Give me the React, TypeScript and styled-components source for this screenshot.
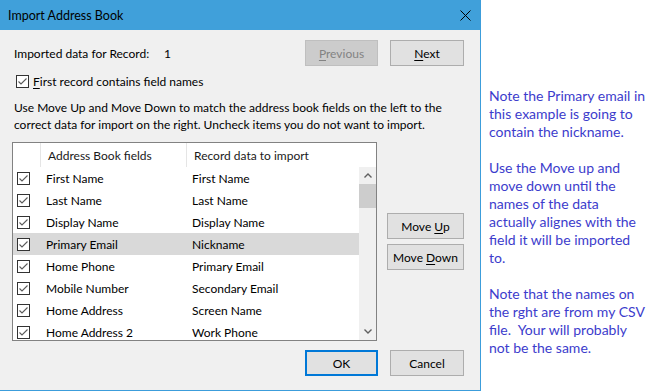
import styled, { createGlobalStyle } from "styled-components";

const GlobalStyle = createGlobalStyle`
  html, body {
    margin: 0;
    padding: 0;
    background: #ffffff;
  }
  body {
    width: 666px;
    height: 391px;
    overflow: hidden;
    font-family: Lato, "Noto Sans", sans-serif;
  }
`;

const rows = [
  { field: "First Name", data: "First Name" },
  { field: "Last Name", data: "Last Name" },
  { field: "Display Name", data: "Display Name" },
  { field: "Primary Email", data: "Nickname", selected: true },
  { field: "Home Phone", data: "Primary Email" },
  { field: "Mobile Number", data: "Secondary Email" },
  { field: "Home Address", data: "Screen Name" },
  { field: "Home Address 2", data: "Work Phone" },
];

const Check = () => (
  <CheckBox>
    <svg width="11" height="11" viewBox="0 0 11 11">
      <path d="M1.5 5.5 L4 8 L9.5 2.5" fill="none" stroke="#5a5a5a" strokeWidth="1.1" />
    </svg>
  </CheckBox>
);

const App = () => {
  return (
    <>
      <GlobalStyle />
      <Page>
        <Dialog>
          <TitleBar>
            <span>Import Address Book</span>
            <svg width="11" height="11" viewBox="0 0 11 11">
              <path d="M0.5 0.5 L10.5 10.5 M10.5 0.5 L0.5 10.5" stroke="#000" strokeWidth="1" />
            </svg>
          </TitleBar>
          <Body>
            <TopRow>
              <Label>Imported data for Record:</Label>
              <span>1</span>
              <Spacer />
              <ButtonGroup>
                <Button $w={73} disabled>
                  <u>P</u>revious
                </Button>
                <Button $w={74}>
                  <u>N</u>ext
                </Button>
              </ButtonGroup>
            </TopRow>
            <CheckRow>
              <Check />
              <span>
                <u>F</u>irst record contains field names
              </span>
            </CheckRow>
            <Para>
              Use Move Up and Move Down to match the address book fields on the left to the
              <br />
              correct data for import on the right. Uncheck items you do not want to import.
            </Para>
            <Main>
              <ListBox>
                <HeaderRow>
                  <HeadCell />
                  <HeadCell $sep>Address Book fields</HeadCell>
                  <HeadCell $sep>Record data to import</HeadCell>
                </HeaderRow>
                <ListArea>
                  <Rows>
                    {rows.map((r) => (
                      <Row key={r.field} $selected={!!r.selected}>
                        <CheckCell>
                          <Check />
                        </CheckCell>
                        <Cell>{r.field}</Cell>
                        <Cell>{r.data}</Cell>
                      </Row>
                    ))}
                  </Rows>
                  <ScrollBar>
                    <ScrollArrow>
                      <svg width="8" height="5" viewBox="0 0 8 5">
                        <path d="M0.5 4.5 L4 1 L7.5 4.5" fill="none" stroke="#606060" strokeWidth="1.4" />
                      </svg>
                    </ScrollArrow>
                    <Thumb />
                    <Spacer />
                    <ScrollArrow>
                      <svg width="8" height="5" viewBox="0 0 8 5">
                        <path d="M0.5 0.5 L4 4 L7.5 0.5" fill="none" stroke="#606060" strokeWidth="1.4" />
                      </svg>
                    </ScrollArrow>
                  </ScrollBar>
                </ListArea>
              </ListBox>
              <SideButtons>
                <Button $w={77}>
                  Move <u>U</u>p
                </Button>
                <Button $w={77}>
                  Move <u>D</u>own
                </Button>
              </SideButtons>
            </Main>
            <Footer>
              <Button $w={73} $default>
                OK
              </Button>
              <Button $w={74}>Cancel</Button>
            </Footer>
          </Body>
        </Dialog>
        <Notes>
          <NoteBlock>
            Note the Primary email in
            <br />
            this example is going to
            <br />
            contain the nickname.
          </NoteBlock>
          <NoteBlock>
            Use the Move up and
            <br />
            move down until the
            <br />
            names of the data
            <br />
            actually alignes with the
            <br />
            field it will be imported
            <br />
            to.
          </NoteBlock>
          <NoteBlock>
            Note that the names on
            <br />
            the rght are from my CSV
            <br />
            file.&nbsp; Your will probably
            <br />
            not be the same.
          </NoteBlock>
        </Notes>
      </Page>
    </>
  );
};

export default App;

const Page = styled.div`
  display: flex;
  width: 666px;
  height: 391px;
`;

const Dialog = styled.div`
  width: 481px;
  height: 391px;
  box-sizing: border-box;
  border-right: 1px solid #3c9ddb;
  border-bottom: 1px solid #3c9ddb;
  background: #f0f0f0;
  display: flex;
  flex-direction: column;
  font-size: 12px;
  color: #000;
`;

const TitleBar = styled.div`
  height: 30px;
  flex-shrink: 0;
  background: #40a0da;
  display: flex;
  align-items: center;
  justify-content: space-between;
  padding: 0 9px 0 8px;
  font-size: 12.5px;
`;

const Body = styled.div`
  display: flex;
  flex-direction: column;
  padding: 10px 16px 0 12px;
`;

const TopRow = styled.div`
  display: flex;
  align-items: center;
  height: 26px;
`;

const Label = styled.span`
  margin-left: 2px;
  width: 150px;
`;

const Spacer = styled.div`
  flex: 1;
`;

const ButtonGroup = styled.div`
  display: flex;
  gap: 12px;
`;

const Button = styled.button<{ $w: number; $default?: boolean }>`
  width: ${(p) => p.$w}px;
  height: 26px;
  box-sizing: border-box;
  padding: 0;
  background: #e1e1e1;
  border: ${(p) => (p.$default ? "2px solid #0078d7" : "1px solid #adadad")};
  font-family: inherit;
  font-size: 12px;
  color: #000;
  &:disabled {
    background: #cccccc;
    border-color: #bfbfbf;
    color: #838383;
  }
  u {
    text-underline-offset: 2px;
  }
`;

const CheckRow = styled.div`
  display: flex;
  align-items: center;
  gap: 4px;
  height: 16px;
  margin-top: 7px;
  padding-left: 4px;
  u {
    text-underline-offset: 2px;
  }
`;

const CheckBox = styled.span`
  display: inline-flex;
  align-items: center;
  justify-content: center;
  width: 13px;
  height: 13px;
  box-sizing: border-box;
  border: 1px solid #333;
  background: #fff;
`;

const Para = styled.p`
  margin: 10px 0 0 2px;
  line-height: 17px;
  white-space: nowrap;
`;

const Main = styled.div`
  display: flex;
  gap: 10px;
  margin-top: 9px;
`;

const ListBox = styled.div`
  width: 365px;
  height: 199px;
  box-sizing: border-box;
  border: 1px solid #828282;
  background: #fff;
  display: flex;
  flex-direction: column;
  overflow: hidden;
`;

const HeaderRow = styled.div`
  display: grid;
  grid-template-columns: 27px 146px 1fr;
  height: 24px;
  flex-shrink: 0;
`;

const HeadCell = styled.div<{ $sep?: boolean }>`
  display: flex;
  align-items: center;
  padding-left: 7px;
  border-left: ${(p) => (p.$sep ? "1px solid #e5e5e5" : "none")};
  color: #1a1a1a;
  white-space: nowrap;
`;

const ListArea = styled.div`
  display: flex;
  flex: 1;
  min-height: 0;
`;

const Rows = styled.div`
  flex: 1;
  overflow: hidden;
`;

const Row = styled.div<{ $selected: boolean }>`
  display: grid;
  grid-template-columns: 27px 146px 1fr;
  height: 22px;
  align-items: center;
  background: ${(p) => (p.$selected ? "#d9d9d9" : "transparent")};
`;

const CheckCell = styled.div`
  display: flex;
  padding-left: 4px;
`;

const Cell = styled.div`
  padding-left: 6px;
  white-space: nowrap;
`;

const ScrollBar = styled.div`
  width: 17px;
  background: #f0f0f0;
  display: flex;
  flex-direction: column;
`;

const ScrollArrow = styled.div`
  height: 17px;
  display: flex;
  align-items: center;
  justify-content: center;
`;

const Thumb = styled.div`
  height: 24px;
  background: #cdcdcd;
`;

const SideButtons = styled.div`
  display: flex;
  flex-direction: column;
  gap: 5px;
  margin-top: 71px;
`;

const Footer = styled.div`
  display: flex;
  justify-content: flex-end;
  gap: 12px;
  margin-top: 9px;
`;

const Notes = styled.div`
  flex: 1;
  padding: 87px 0 0 8px;
  font-family: Lato, "Noto Sans", sans-serif;
  font-size: 14px;
  line-height: 18px;
  color: #3c3ccc;
`;

const NoteBlock = styled.p`
  margin: 0 0 18px;
  white-space: nowrap;
`;
